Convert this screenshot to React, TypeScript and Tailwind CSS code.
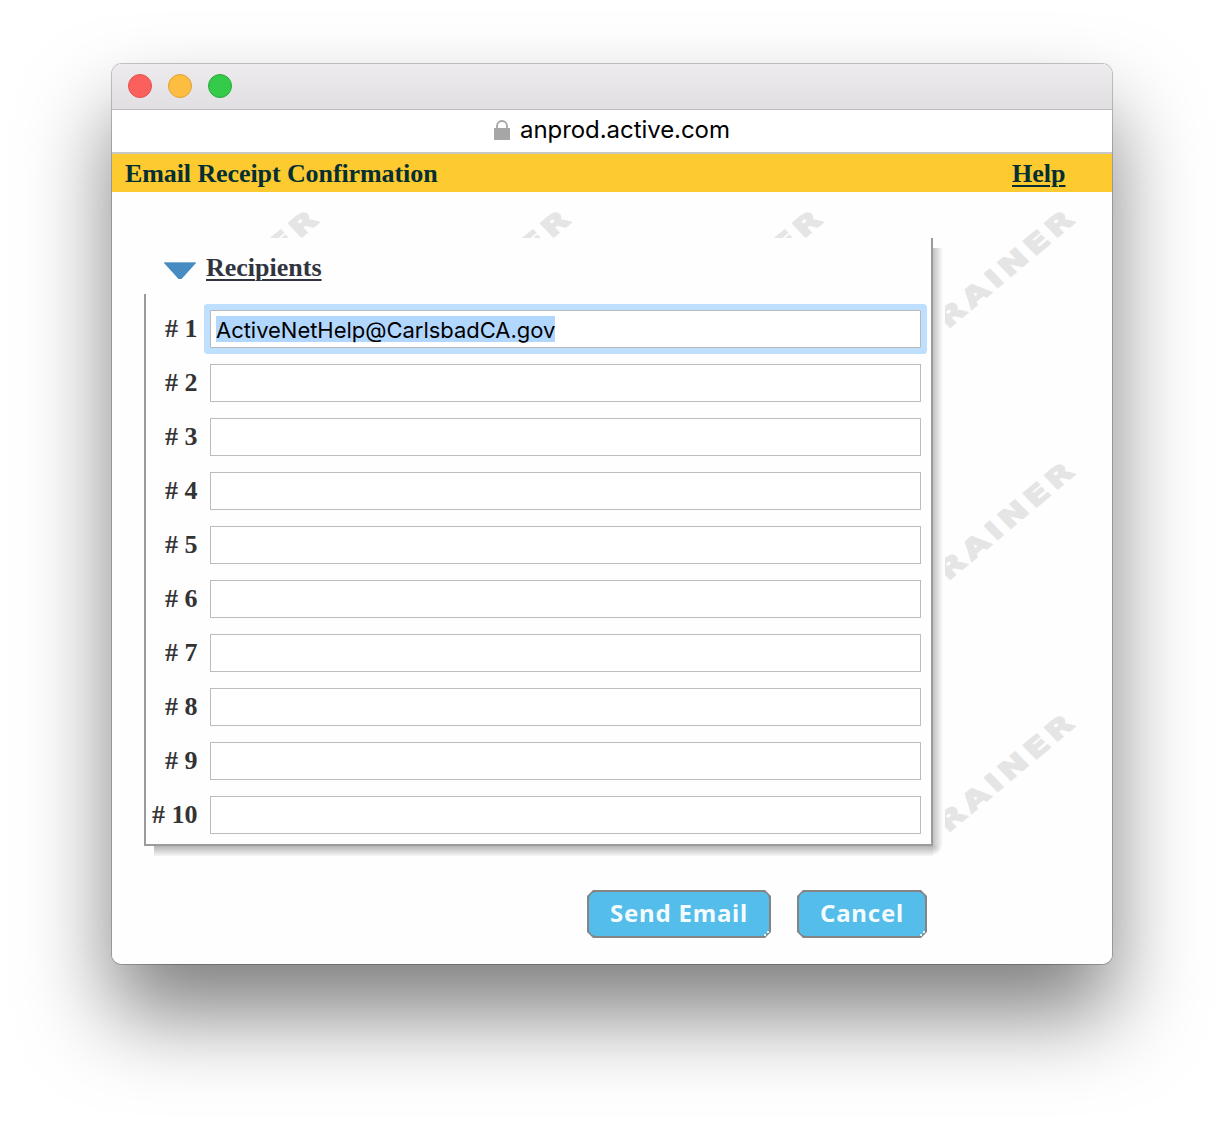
const ROWS = [1, 2, 3, 4, 5, 6, 7, 8, 9, 10];

function Watermark() {
  const tiles = [];
  for (let row = 0; row < 3; row++) {
    for (let col = 0; col < 4; col++) {
      tiles.push({ x: 80 + col * 252, y: 137 + row * 252 });
    }
  }
  return (
    <svg className="pointer-events-none absolute inset-0" width="1000" height="772" aria-hidden="true">
      {tiles.map((t) => (
        <text
          key={`${t.x}-${t.y}`}
          transform={`translate(${t.x} ${t.y}) rotate(-40) skewX(4) scale(1.3 1)`}
          fill="#e5e5e5"
          stroke="#e5e5e5"
          strokeWidth="1.5"
          fontFamily="DejaVu Sans, sans-serif"
          fontWeight="700"
          fontSize="26"
          textLength="128"
          lengthAdjust="spacing"
        >
          RAINER
        </text>
      ))}
    </svg>
  );
}

function PushButton({ label, className }: { label: string; className: string }) {
  return (
    <button className={`relative h-12 ${className}`}>
      <span className="absolute inset-0 bg-[#858585] [clip-path:polygon(6px_0,calc(100%-6px)_0,100%_6px,100%_calc(100%-6px),calc(100%-6px)_100%,6px_100%,0_calc(100%-6px),0_6px)]" />
      <span className="absolute inset-[2px] rounded-[7px] bg-[#54bde9]" />
      <svg className="absolute right-0 bottom-0" width="8" height="8" aria-hidden="true">
        <path d="M1 4h2v2H1zM4 1h2v2H4z" fill="#e4f2f9" />
      </svg>
      <span className="relative -top-px font-['Noto_Sans',sans-serif] text-[24px] leading-[44px] font-bold tracking-[0.8px] whitespace-nowrap text-[#f3fbff]">
        {label}
      </span>
    </button>
  );
}

export default function App() {
  return (
    <div className="flex h-[1124px] w-[1224px] items-start overflow-hidden bg-white pt-16 pl-28">
      <div className="h-[900px] w-[1000px] rounded-[10px] shadow-[0_0_0_1px_rgba(0,0,0,0.22),0_50px_86px_rgba(0,0,0,0.5)]">
        <div className="flex h-full flex-col overflow-hidden rounded-[10px] bg-white">
          <div className="flex h-[46px] shrink-0 items-center gap-4 border-b border-[#bfbdc0] bg-gradient-to-b from-[#edebee] to-[#e1dfe2] pb-px pl-4">
            <span className="size-6 rounded-full border border-[#e2514e] bg-[#fc605c]" />
            <span className="size-6 rounded-full border border-[#dfa037] bg-[#fdbd40]" />
            <span className="size-6 rounded-full border border-[#2aa93a] bg-[#34ca4a]" />
          </div>
          <div className="flex h-[44px] shrink-0 items-center border-b-2 border-[#c9c9c9] bg-white pb-[2px] pl-[382px]">
            <svg width="16" height="20" viewBox="0 0 16 20" aria-hidden="true">
              <path d="M3 9V6a5 5 0 0 1 10 0v3" fill="none" stroke="#a6a6a6" strokeWidth="1.8" />
              <path d="M0 8h16v12H0z" fill="#a6a6a6" />
            </svg>
            <span className="ml-[10px] font-[Inter,sans-serif] text-[24px] leading-7 tracking-[-0.06px] text-black">anprod.active.com</span>
          </div>
          <div className="flex h-[38px] shrink-0 items-center justify-between bg-[#fdca2f] pt-[2px] pr-[46.500px] pl-[13px] font-['Liberation_Serif',serif] text-[26px] leading-[38px] font-bold text-[#052f33]">
            <h1 className="tracking-[-0.09px]">Email Receipt Confirmation</h1>
            <a href="#help" className="underline decoration-2 underline-offset-[3px]">Help</a>
          </div>
          <main className="relative h-[772px] bg-[#fefefe]">
            <Watermark />
            <div className="relative pt-[46px]">
              <section className="w-[833px] bg-[#fefefe] pb-[10px] pl-8">
                <div className="relative h-[608px] w-[789px] border-r-2 border-[#999b9c]">
                  <div className="absolute top-[10px] left-[789px] h-[598px] w-[10px] bg-gradient-to-r from-[#c2c2c2] to-[#fefefe]" />
                  <div className="absolute top-[608px] left-[10px] h-[10px] w-[779px] bg-gradient-to-b from-[#b5b5b5] to-[#f6f6f6]" />
                  <div className="absolute top-[608px] left-[789px] size-[10px] bg-[radial-gradient(circle_at_top_left,#b8b8b8,#fefefe_9px)]" />
                  <div className="flex h-14 items-center pl-5 font-['Liberation_Serif',serif] text-[26px] font-bold text-[#30343f]">
                    <svg width="32" height="18" className="mt-[10px]" aria-hidden="true">
                      <path d="M0 1h32L17.500 17h-3z" fill="#468bc1" />
                      <path d="M0 0h32v1H0z" fill="#83b3d6" />
                    </svg>
                    <h2 className="mt-[3px] ml-[10px] leading-[30px] underline decoration-2 underline-offset-[3px]">Recipients</h2>
                  </div>
                  <div className="flex h-[552px] flex-col gap-4 border-b-2 border-l-2 border-[#999b9c] pt-4">
                    {ROWS.map((n) => (
                      <label key={n} className="flex h-[38px] shrink-0 items-center">
                        <span className="w-[51.500px] text-right font-['Liberation_Serif',serif] text-[26px] leading-[38px] font-bold whitespace-nowrap text-[#333]">
                          # {n}
                        </span>
                        <span
                          className={
                            n === 1
                              ? "ml-[12.500px] flex h-[38px] w-[711px] items-center rounded-[1px] border border-[#b9b9b9] bg-white pl-[5px] shadow-[0_0_0_6px_#bfdfff]"
                              : "ml-[12.500px] flex h-[38px] w-[711px] items-center border border-[#bcbcbc] bg-white pl-[5px]"
                          }
                        >
                          {n === 1 && (
                            <span className="h-[26px] w-[339px] bg-[#b2d7ff] font-[Inter,sans-serif] text-[22px] leading-[28px] tracking-[-0.03px] whitespace-nowrap text-black">
                              ActiveNetHelp@CarlsbadCA.gov
                            </span>
                          )}
                        </span>
                      </label>
                    ))}
                  </div>
                </div>
              </section>
              <div className="mt-[34px] flex gap-[26px] pl-[475px]">
                <PushButton label="Send Email" className="w-[184px]" />
                <PushButton label="Cancel" className="w-[130px]" />
              </div>
            </div>
          </main>
        </div>
      </div>
    </div>
  );
}
